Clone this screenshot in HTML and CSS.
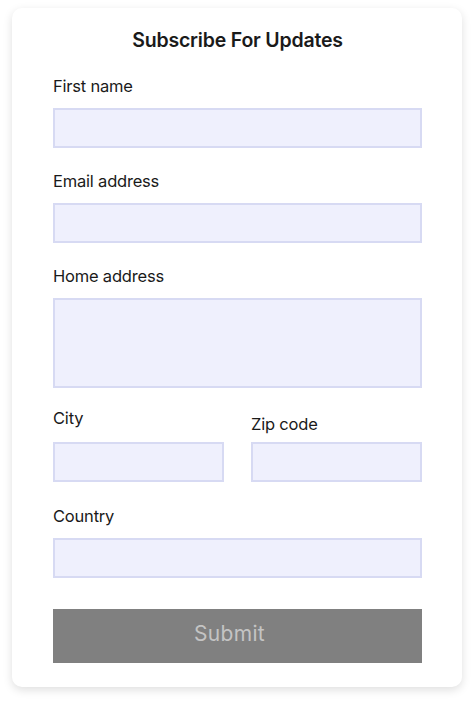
FILE: index.html
```html
<!DOCTYPE html>
<html lang="en">
<head>
    <meta charset="UTF-8">
    <meta name="viewport" content="width=device-width, initial-scale=1.0">
    <title>Subscribe For Updates</title>
    <link rel="stylesheet" href="styles.css">
</head>
<body>

    <form class="card">
        <h1>Subscribe For Updates</h1>

        <label class="field">
            <span class="label">First name</span>
            <input type="text">
        </label>

        <label class="field">
            <span class="label">Email address</span>
            <input type="email">
        </label>

        <label class="field address">
            <span class="label">Home address</span>
            <textarea></textarea>
        </label>

        <!-- City and zip share a row -->
        <div class="row">
            <label class="field city">
                <span class="label">City</span>
                <input type="text">
            </label>
            <label class="field zip">
                <span class="label">Zip code</span>
                <input type="text">
            </label>
        </div>

        <label class="field">
            <span class="label">Country</span>
            <input type="text">
        </label>

        <button type="button" class="submit" disabled>Submit</button>
    </form>

</body>
</html>
```

FILE: styles.css
```css
body {
    font-family: Inter, "Noto Sans", sans-serif;
    margin: 0;
    padding: 8px 12px 16px;
    background-color: #fff;
    color: #1a1a1a;
}

.card {
    background-color: #fff;
    border-radius: 10px;
    box-shadow: 0px 3px 10px rgba(0, 0, 0, 0.13);
    padding: 20px 40px 24px 41px;
    display: flex;
    flex-direction: column;
}

h1 {
    text-align: center;
    font-size: 19.5px;
    font-weight: 600;
    letter-spacing: -0.2px;
    margin: 0 0 23px;
    line-height: 24px;
}

.field {
    display: flex;
    flex-direction: column;
    margin-bottom: 22px;
}

.label {
    font-size: 16.5px;
    line-height: 22px;
    letter-spacing: -0.2px;
    margin-bottom: 11px;
}

input,
textarea {
    box-sizing: border-box;
    width: 100%;
    height: 40px;
    margin: 0;
    border: 2px solid #d7daf3;
    background-color: #eff0fd;
    font: inherit;
    resize: none;
}

textarea {
    height: 90px;
}

.address {
    margin-bottom: 19px;
}

.row {
    display: flex;
    gap: 27px;
}

.row .field {
    flex: 1;
    margin-bottom: 23px;
}

.city .label {
    margin-bottom: 13px;
}

/* Zip label sits a little lower than the city label */
.zip .label {
    margin-top: 6px;
    margin-bottom: 7px;
}

.submit {
    margin-top: 9px;
    height: 54px;
    padding: 0 16px 5px 0;
    border: none;
    background-color: #808080;
    color: #c4c4c4;
    font-family: Inter, "Noto Sans", sans-serif;
    font-size: 21px;
    letter-spacing: 0.3px;
}
```
